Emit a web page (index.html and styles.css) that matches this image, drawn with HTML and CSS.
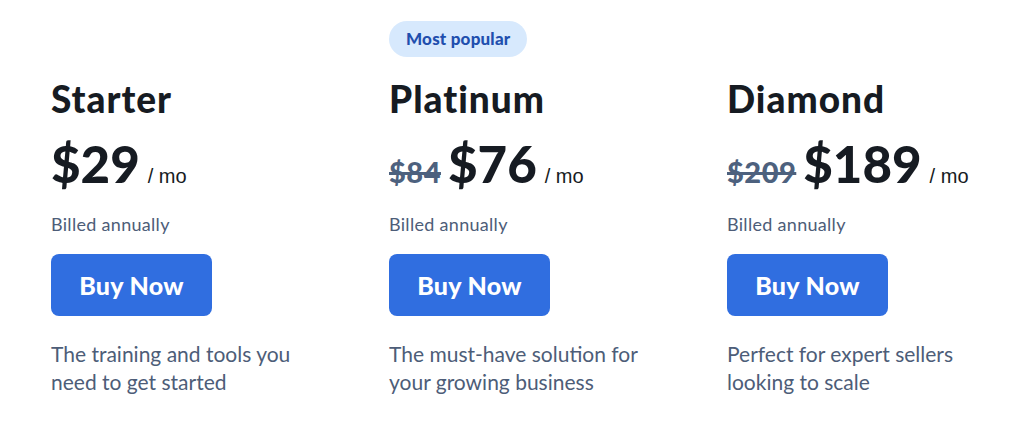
FILE: index.html
```html
<!DOCTYPE html>
<html lang="en">
<head>
<meta charset="UTF-8">
<meta name="viewport" content="width=device-width, initial-scale=1.0">
<title>Pricing</title>
<link rel="stylesheet" href="styles.css">
</head>
<body>
<div class="plans">
  <div class="plan">
    <div class="badge-slot"></div>
    <h2>Starter</h2>
    <div class="price">
      <span class="amount">$29</span>
      <span class="per">/ mo</span>
    </div>
    <p class="billed">Billed annually</p>
    <button type="button">Buy Now</button>
    <p class="desc">The training and tools you need to get started</p>
  </div>
  <div class="plan">
    <div class="badge-slot"><span class="badge">Most popular</span></div>
    <h2>Platinum</h2>
    <div class="price">
      <span class="old">$84</span>
      <span class="amount">$76</span>
      <span class="per">/ mo</span>
    </div>
    <p class="billed">Billed annually</p>
    <button type="button">Buy Now</button>
    <p class="desc">The must-have solution for your growing business</p>
  </div>
  <div class="plan">
    <div class="badge-slot"></div>
    <h2>Diamond</h2>
    <div class="price">
      <span class="old">$209</span>
      <span class="amount">$189</span>
      <span class="per">/ mo</span>
    </div>
    <p class="billed">Billed annually</p>
    <button type="button">Buy Now</button>
    <p class="desc">Perfect for expert sellers looking to scale</p>
  </div>
</div>
</body>
</html>
```

FILE: styles.css
```css
body {
  font-family: 'Lato', 'Open Sans', sans-serif;
  background-color: #fff;
  margin: 0;
  padding: 21px 0 0 51px;
  color: #161b22;
}
.plans {
  display: grid;
  grid-template-columns: repeat(3, 270px);
  column-gap: 68px;
}
.plan {
  display: flex;
  flex-direction: column;
  align-items: flex-start;
}
.badge-slot {
  height: 36px;
  margin-bottom: 20px;
}
.badge {
  display: inline-block;
  height: 36px;
  line-height: 36px;
  padding: 0 17px;
  border-radius: 18px;
  background: #d7e9fd;
  color: #1f4fae;
  font-weight: 900;
  font-size: 17px;
  letter-spacing: 0.2px;
}
h2 {
  margin: 0;
  font-size: 37px;
  line-height: 44px;
  font-weight: 900;
  letter-spacing: 1px;
}
.price {
  display: flex;
  align-items: baseline;
  margin-top: 13px;
  height: 60px;
}
.amount {
  font-size: 51px;
  font-weight: 900;
  line-height: 60px;
}
.old {
  font-size: 29px;
  font-weight: 900;
  color: #4d617e;
  text-decoration: line-through;
  text-decoration-thickness: 3px;
  letter-spacing: 0.5px;
  margin-right: 7px;
}
.per {
  font-family: 'Liberation Sans', sans-serif;
  font-size: 20px;
  margin-left: 8px;
}
.billed {
  margin: 18px 0 0;
  font-size: 18px;
  line-height: 24px;
  letter-spacing: 0.3px;
  color: #4d5d78;
}
button {
  margin-top: 18px;
  width: 161px;
  height: 62px;
  border: none;
  border-radius: 8px;
  background-color: #306ee0;
  color: #fff;
  font-family: inherit;
  font-size: 25px;
  font-weight: 900;
  letter-spacing: 0.3px;
  cursor: pointer;
}
.desc {
  margin: 24px 0 0;
  font-size: 21px;
  line-height: 28px;
  color: #4d5d78;
}
```
